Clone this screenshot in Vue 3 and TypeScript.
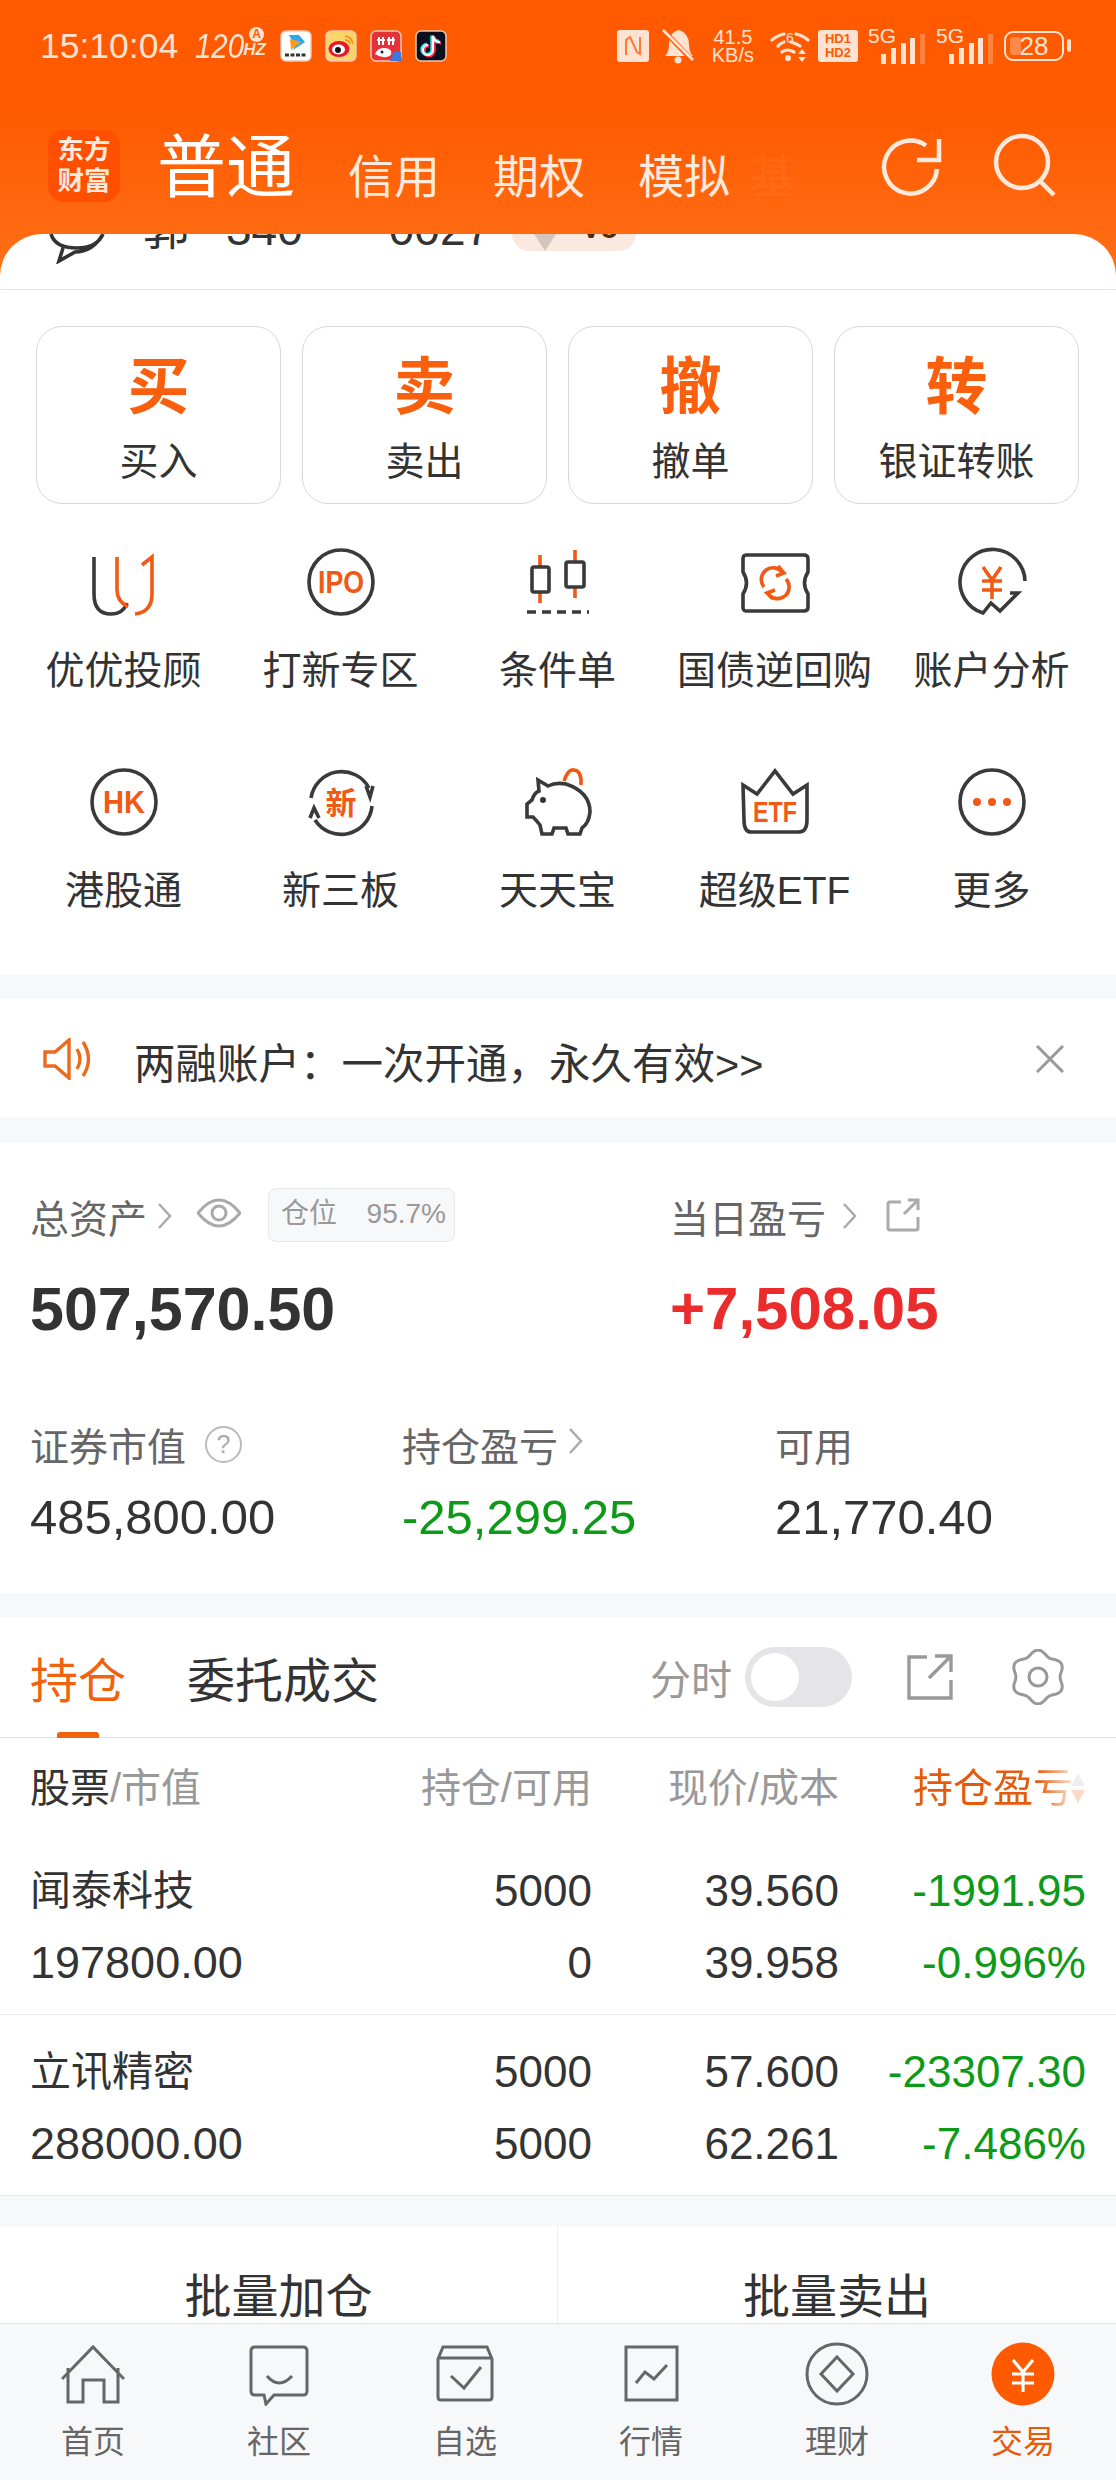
<script setup lang="ts">
interface Holding {
  name: string
  value: string
  hold: string
  free: string
  price: string
  cost: string
  gain: string
  rate: string
}

const trades = [
  { big: '买', label: '买入' },
  { big: '卖', label: '卖出' },
  { big: '撤', label: '撤单' },
  { big: '转', label: '银证转账' },
]

const tools = [
  { id: 'uu', label: '优优投顾' },
  { id: 'ipo', label: '打新专区' },
  { id: 'cond', label: '条件单' },
  { id: 'bond', label: '国债逆回购' },
  { id: 'analysis', label: '账户分析' },
  { id: 'hk', label: '港股通' },
  { id: 'neeq', label: '新三板' },
  { id: 'pig', label: '天天宝' },
  { id: 'etf', label: '超级ETF' },
  { id: 'more', label: '更多' },
]

const holdings: Holding[] = [
  { name: '闻泰科技', value: '197800.00', hold: '5000', free: '0', price: '39.560', cost: '39.958', gain: '-1991.95', rate: '-0.996%' },
  { name: '立讯精密', value: '288000.00', hold: '5000', free: '5000', price: '57.600', cost: '62.261', gain: '-23307.30', rate: '-7.486%' },
]

const tabs = [
  { id: 'home', label: '首页' },
  { id: 'community', label: '社区' },
  { id: 'watch', label: '自选' },
  { id: 'market', label: '行情' },
  { id: 'wealth', label: '理财' },
  { id: 'trade', label: '交易' },
]

// six soft lobes, one pointing straight up
const gearPath = Array.from({ length: 72 }, (_, i) => {
  const a = (i * Math.PI) / 36
  const r = 24.5 + 2.4 * Math.cos(6 * a)
  const x = 28 + r * Math.sin(a)
  const y = 28 - r * Math.cos(a)
  return `${i ? 'L' : 'M'}${x.toFixed(1)} ${y.toFixed(1)}`
}).join(' ') + 'z'
</script>

<template>
  <div class="page">
    <header class="header">
      <div class="status">
        <div class="status-left">
          <span class="clock">15:10:04</span>
          <span class="hz"><i>120</i><b>HZ</b><em>A</em></span>
          <div class="apps">
            <svg class="app" viewBox="0 0 32 32">
              <rect x="1" y="1" width="30" height="30" rx="5" fill="#fff" stroke="#e9c9b4" stroke-width="1.5" />
              <path d="M9 5 H19 L25 12 L13 20 L17 12 Q12 12 9 5z" fill="#29a8f2" />
              <path d="M10 9 L21 12 L11 20z" fill="#ff9a1f" />
              <path d="M5 25 H27" stroke="#333" stroke-width="3" stroke-dasharray="4 1.5" />
            </svg>
            <svg class="app" viewBox="0 0 32 32">
              <rect x="1" y="1" width="30" height="30" rx="5" fill="#fbd46c" stroke="#e9c9b4" stroke-width="1.5" />
              <ellipse cx="14" cy="19" rx="10.5" ry="8" fill="#e6162d" />
              <ellipse cx="13.5" cy="19.5" rx="6.5" ry="5" fill="#fff" />
              <circle cx="13" cy="20" r="3" fill="#111" />
              <path d="M20 6 Q27 7 28 14 M20 10 Q24 10 25 14" fill="none" stroke="#f59a23" stroke-width="2" />
            </svg>
            <svg class="app" viewBox="0 0 32 32">
              <rect x="1" y="1" width="30" height="30" rx="5" fill="#e4323b" stroke="#e9c9b4" stroke-width="1.5" />
              <path d="M24 22 H31 V31 H20z" fill="#3a77e0" />
              <path d="M9 7 V15 M13 7 V15 M19 7 V15 M23 7 V15 M7 10 H15 M17 10 H25" stroke="#fff" stroke-width="2" />
              <path d="M5 24 Q8 17 15 18 Q23 19 21 25 Q14 30 5 24z" fill="#fff" />
              <circle cx="12" cy="22" r="1.5" fill="#222" />
            </svg>
            <svg class="app" viewBox="0 0 32 32">
              <rect x="1" y="1" width="30" height="30" rx="5" fill="#0c0f1c" stroke="#e9c9b4" stroke-width="1.5" />
              <path d="M18 6 V20 A5 5 0 1 1 13 15 M18 6 Q19 12 25 12" fill="none" stroke="#ff2a55" stroke-width="3.4" transform="translate(1 .8)" />
              <path d="M18 6 V20 A5 5 0 1 1 13 15 M18 6 Q19 12 25 12" fill="none" stroke="#25f4ee" stroke-width="3.4" transform="translate(-1 -.6)" />
              <path d="M18 6 V20 A5 5 0 1 1 13 15 M18 6 Q19 12 25 12" fill="none" stroke="#fff" stroke-width="2" />
            </svg>
          </div>
        </div>
        <div class="status-right">
          <svg class="nfc" viewBox="0 0 32 32">
            <rect width="32" height="32" rx="3" fill="#ffe3d2" />
            <path d="M9 25 V10 L13 7 L20 22 L23 24 V7" fill="none" stroke="#ff7a33" stroke-width="2" />
          </svg>
          <svg class="bell" viewBox="0 0 32 36">
            <path d="M3 28 Q7 24 7 17 Q7 4 17 2 Q27 5 27 17 Q27 24 31 28z" fill="#ffe3d2" />
            <circle cx="16" cy="32" r="3.5" fill="#ffe3d2" />
            <path d="M0 1 L31 33" stroke="#ff5a00" stroke-width="5" />
            <path d="M1 2 L31 32" stroke="#ffe3d2" stroke-width="2.6" />
          </svg>
          <div class="speed"><span>41.5</span><span>KB/s</span></div>
          <svg class="wifi" viewBox="0 0 40 34">
            <path d="M2 11 Q8 6 14 5 M26 5 Q32 6 38 11 M8 17 Q11 14 14 13 M21 13 Q25 14 30 17 M12 23 Q17 19 24 23" fill="none" stroke="#ffe3d2" stroke-width="3.2" stroke-linecap="round" />
            <circle cx="18" cy="29" r="3" fill="#ffe3d2" />
            <text x="20" y="14" class="wifi-six">6</text>
            <path d="M32 20 L36 25 H28z M28 28 H36 L32 33z" fill="#ffe3d2" />
          </svg>
          <div class="hd"><span>HD1</span><span>HD2</span></div>
          <div class="signal">
            <span class="net">5G</span>
            <svg viewBox="0 0 45 30"><path d="M0 20 h5 v10 h-5z M10 14 h5 v16 h-5z M20 9 h5 v21 h-5z M29 4 h5 v26 h-5z" fill="#ffe3d2" /><path d="M39 0 h5 v30 h-5z" fill="#ffe3d2" opacity=".3" /></svg>
          </div>
          <div class="signal second">
            <span class="net">5G</span>
            <svg viewBox="0 0 45 30"><path d="M0 20 h5 v10 h-5z M10 14 h5 v16 h-5z M20 9 h5 v21 h-5z M29 4 h5 v26 h-5z" fill="#ffe3d2" /><path d="M39 0 h5 v30 h-5z" fill="#ffe3d2" opacity=".3" /></svg>
          </div>
          <div class="battery"><i></i><span>28</span></div>
        </div>
      </div>

      <nav class="nav">
        <div class="logo"><span>东方</span><span>财富</span></div>
        <span class="nav-main">普通</span>
        <span class="nav-item">信用</span>
        <span class="nav-item">期权</span>
        <span class="nav-item">模拟</span>
        <span class="nav-ghost">基</span>
        <svg class="nav-refresh" viewBox="0 0 64 64">
          <path d="M57 33 A26.500 26.500 0 1 1 46 9.500" fill="none" stroke="#ffe9dc" stroke-width="4.500" />
          <path d="M37 24 H59 V3" fill="none" stroke="#ffe9dc" stroke-width="4.500" />
        </svg>
        <svg class="nav-search" viewBox="0 0 64 64">
          <circle cx="29" cy="29" r="26" fill="none" stroke="#ffe9dc" stroke-width="4.500" />
          <path d="M47 48 L61 62" stroke="#ffe9dc" stroke-width="4.500" />
        </svg>
      </nav>
    </header>

    <main class="sheet">
      <div class="account">
        <svg class="account-chat" viewBox="0 0 56 30">
          <path d="M2 0 Q6 14 28 14 Q48 14 54 0 M14 14 L10 27 L26 18 Q44 18 54 0" fill="none" stroke="#333" stroke-width="3.600" />
        </svg>
        <span class="acc-name">郭</span>
        <span class="acc-a">340</span>
        <span class="acc-b">0027</span>
        <span class="acc-badge"><i></i><b>V5</b></span>
      </div>

      <section class="trades">
        <div v-for="t in trades" :key="t.big" class="trade">
          <span class="trade-big">{{ t.big }}</span>
          <span class="trade-label">{{ t.label }}</span>
        </div>
      </section>

      <section class="tools">
        <div v-for="t in tools" :key="t.id" class="tool">
          <svg class="tool-icon" viewBox="0 0 68 68">
            <template v-if="t.id === 'uu'">
              <path d="M4 9 V46 Q4 66 21 66 Q33 66 37 55" class="ink" />
              <path d="M27 9 V42 Q27 53 38 59" class="hot" />
              <path d="M45 66 Q62 64 62 46 V9 L52 17" class="hot" />
            </template>
            <template v-else-if="t.id === 'ipo'">
              <circle cx="34" cy="34" r="32" class="ink" />
              <text x="34" y="45" class="tool-text" font-size="31" textLength="46" lengthAdjust="spacingAndGlyphs">IPO</text>
            </template>
            <template v-else-if="t.id === 'cond'">
              <path d="M16 7 V20 M16 44 V55 M51 2 V14 M51 39 V50" class="hot" />
              <rect x="8" y="19" width="17" height="25" rx="2" class="ink" />
              <rect x="42" y="14" width="18" height="25" rx="2" class="ink" />
              <path d="M3 64 H65" class="ink" stroke-dasharray="9 6" />
            </template>
            <template v-else-if="t.id === 'bond'">
              <path d="M5 7 H63 Q67 7 67 11 V24 Q60 35 67 46 V59 Q67 63 63 63 H5 Q2 63 2 59 V46 Q9 35 2 24 V11 Q2 7 5 7z" class="ink" />
              <path d="M23 39 A11.500 11.500 0 0 1 41 24 M45 31 A11.500 11.500 0 0 1 28 47" class="hot" />
              <path d="M37 18 L43 25 L35 28 M32 51 L26 45 L34 42" class="hot" />
            </template>
            <template v-else-if="t.id === 'analysis'">
              <path d="M67 33 A32.500 32.500 0 1 0 25 65 L33 55 L42 63 L60 45 H52" class="ink" />
              <path d="M25 19 L34 32 L43 19 M34 32 V51 M24 33 H44 M24 42 H44" class="hot" stroke-width="4.500" />
            </template>
            <template v-else-if="t.id === 'hk'">
              <circle cx="34" cy="34" r="32" class="ink" />
              <text x="34" y="45" class="tool-text" font-size="31" textLength="42" lengthAdjust="spacingAndGlyphs">HK</text>
            </template>
            <template v-else-if="t.id === 'neeq'">
              <path d="M4 30 A31 31 0 0 1 62 20 M65 38 A31 31 0 0 1 8 52" class="ink" />
              <path d="M59 18 L63 29 L66 18 M3 50 L7 40 L12 50" class="ink" />
              <text x="34" y="46" class="tool-text cjk" font-size="31">新</text>
            </template>
            <template v-else-if="t.id === 'pig'">
              <path d="M40 13 Q44 1 50 2 Q58 3 57 17" class="hot" stroke-width="4" />
              <path d="M14 12 L24 18 Q32 14 42 16 Q66 24 66 44 Q65 55 58 60 L56 66 H44 L42 60 H30 L28 66 H18 L16 57 Q12 52 9 49 H3 V36 L8 32 Q10 25 15 23z" class="ink" />
              <circle cx="19" cy="32" r="3" fill="#333" />
            </template>
            <template v-else-if="t.id === 'etf'">
              <path d="M2 17 L16 26 L34 3 L52 26 L66 17 V52 Q66 64 58 64 H10 Q3 64 3 52z" class="ink" />
              <text x="34" y="54" class="tool-text" font-size="30" textLength="44" lengthAdjust="spacingAndGlyphs">ETF</text>
            </template>
            <template v-else>
              <circle cx="34" cy="34" r="32" class="ink" />
              <circle cx="19" cy="34" r="4" fill="#f05a14" />
              <circle cx="34" cy="34" r="4" fill="#f05a14" />
              <circle cx="49" cy="34" r="4" fill="#f05a14" />
            </template>
          </svg>
          <span class="tool-label">{{ t.label }}</span>
        </div>
      </section>

      <div class="gap"></div>

      <section class="notice">
        <svg class="notice-horn" viewBox="0 0 48 42">
          <path d="M2 14 H12 L26 2 V40 L12 28 H2z" fill="none" stroke="#ec6a1c" stroke-width="3.400" />
          <path d="M34 11 Q40 21 34 31 M40 4 Q51 21 40 38" fill="none" stroke="#ec6a1c" stroke-width="3.400" />
        </svg>
        <span class="notice-text">两融账户：一次开通，永久有效&gt;&gt;</span>
        <svg class="notice-close" viewBox="0 0 28 28">
          <path d="M1 1 L27 27 M27 1 L1 27" stroke="#999" stroke-width="3" />
        </svg>
      </section>

      <div class="gap gap-b"></div>

      <section class="assets">
        <div class="assets-top">
          <div>
            <div class="label">
              <span>总资产</span>
              <svg class="chev" viewBox="0 0 15 26"><path d="M2 1 L13 13 L2 25" /></svg>
              <svg class="eye" viewBox="0 0 44 32">
                <path d="M1 16 Q22 -10 43 16 Q22 42 1 16z" fill="none" stroke="#aaa" stroke-width="3" />
                <circle cx="22" cy="16" r="7" fill="none" stroke="#aaa" stroke-width="3" />
              </svg>
              <span class="pill"><span>仓位</span><span>95.7%</span></span>
            </div>
            <div class="big">507,570.50</div>
          </div>
          <div>
            <div class="label">
              <span>当日盈亏</span>
              <svg class="chev day" viewBox="0 0 15 26"><path d="M2 1 L13 13 L2 25" /></svg>
              <svg class="share" viewBox="0 0 34 34">
                <path d="M15 4 H4 Q2 4 2 6 V30 Q2 32 4 32 H30 Q32 32 32 30 V19 M18 16 L32 2 M22 2 H32 V12" fill="none" stroke="#aaa" stroke-width="3" />
              </svg>
            </div>
            <div class="big up">+7,508.05</div>
          </div>
        </div>
        <div class="assets-sub">
          <div>
            <div class="label">
              <span>证券市值</span>
              <span class="help">?</span>
            </div>
            <div class="num">485,800.00</div>
          </div>
          <div>
            <div class="label">
              <span>持仓盈亏</span>
              <svg class="chev hold" viewBox="0 0 15 26"><path d="M2 1 L13 13 L2 25" /></svg>
            </div>
            <div class="num down">-25,299.25</div>
          </div>
          <div>
            <div class="label"><span>可用</span></div>
            <div class="num">21,770.40</div>
          </div>
        </div>
      </section>

      <div class="gap"></div>

      <section class="bar">
        <span class="tab active">持仓</span>
        <span class="tab">委托成交</span>
        <span class="bar-time">分时</span>
        <span class="switch"><i></i></span>
        <svg class="bar-share" viewBox="0 0 46 46">
          <path d="M20 3 H2 V44 H44 V26 M22 24 L44 2 M28 2 H44 V18" fill="none" stroke="#999" stroke-width="3.400" />
        </svg>
        <svg class="bar-gear" viewBox="0 0 56 56">
          <path :d="gearPath" fill="none" stroke="#999" stroke-width="3" />
          <circle cx="28" cy="28" r="9" fill="none" stroke="#999" stroke-width="3" />
        </svg>
      </section>

      <section class="table">
        <div class="row head">
          <div class="cell-name">股票<span>/市值</span></div>
          <div>持仓/可用</div>
          <div>现价/成本</div>
          <div class="head-sort">
            <span class="head-fade">持仓盈亏</span>
            <svg class="sort" viewBox="0 0 16 34">
              <path d="M8 2 L15 15 H1z" fill="#eee" />
              <path d="M1 19 H15 L8 32z" fill="#fbd9c6" />
            </svg>
          </div>
        </div>
        <div v-for="h in holdings" :key="h.name" class="row item">
          <div class="cell-name"><div>{{ h.name }}</div><div>{{ h.value }}</div></div>
          <div><div>{{ h.hold }}</div><div>{{ h.free }}</div></div>
          <div><div>{{ h.price }}</div><div>{{ h.cost }}</div></div>
          <div class="down"><div>{{ h.gain }}</div><div>{{ h.rate }}</div></div>
        </div>
      </section>

      <div class="gap gap-c"></div>

      <section class="batch">
        <span>批量加仓</span>
        <span>批量卖出</span>
      </section>
    </main>

    <footer class="tabbar">
      <div v-for="t in tabs" :key="t.id" class="tabbar-item" :class="{ on: t.id === 'trade' }">
        <svg class="tabbar-icon" viewBox="0 0 64 64">
          <template v-if="t.id === 'home'">
            <path d="M7 26 V60 H22 V38 H43 V60 H57 V26 M1 37 L32 5 L63 37" class="line" />
          </template>
          <template v-else-if="t.id === 'community'">
            <path d="M8 5 H56 Q60 5 60 9 V49 Q60 53 56 53 H27 L19 62 L17 53 H8 Q4 53 4 49 V9 Q4 5 8 5z" class="line" />
            <path d="M20 34 Q32 48 45 34" class="line" />
          </template>
          <template v-else-if="t.id === 'watch'">
            <path d="M10 5 H54 L59 17 V55 Q59 58 56 58 H8 Q5 58 5 55 V17z M5 16 H59" class="line" />
            <path d="M18 34 L31 46 L48 25" class="line" />
          </template>
          <template v-else-if="t.id === 'market'">
            <path d="M7 5 H58 V58 H7z" class="line" />
            <path d="M17 41 L26 30 L35 37 L48 23" class="line" />
          </template>
          <template v-else-if="t.id === 'wealth'">
            <circle cx="32" cy="32" r="30" class="line" />
            <path d="M32 15 L48 32 L32 49 L16 32z" class="line" />
          </template>
          <template v-else>
            <circle cx="32" cy="32" r="31.500" fill="#ff5a00" />
            <path d="M22 18 L32 30 L42 18 M32 30 V50 M21 32 H43 M21 41 H43" fill="none" stroke="#fff" stroke-width="3.200" />
          </template>
        </svg>
        <span class="tabbar-label">{{ t.label }}</span>
      </div>
    </footer>
  </div>
</template>

<style>
html,
body {
  margin: 0;
  background: #fff;
}
</style>

<style scoped>
.page {
  width: 1116px;
  height: 2480px;
  overflow: hidden;
  background: #fff;
  color: #333;
  font-family: "Liberation Sans", "Noto Sans CJK SC", sans-serif;
}

.header {
  height: 290px;
  box-sizing: border-box;
  background: linear-gradient(180deg, #ff5a00 0, #ff5a00 110px, #ff7219 290px);
}

.status {
  display: flex;
  justify-content: space-between;
  height: 64px;
  padding: 28px 48px 0 40px;
  color: #ffe3d2;
}

.status-left,
.status-right {
  display: flex;
  align-items: center;
  height: 36px;
}

.clock {
  font-size: 35.5px;
}

.hz {
  position: relative;
  display: flex;
  align-items: flex-end;
  margin-left: 17px;
  width: 69px;
  height: 36px;
}

.hz i {
  display: block;
  flex: none;
  width: 48px;
  font-size: 35px;
  line-height: 36px;
  transform: scaleX(0.84);
  transform-origin: 0 50%;
}

.hz b {
  font-size: 17px;
  font-style: italic;
  line-height: 28px;
}

.hz em {
  position: absolute;
  right: 0;
  top: -1px;
  width: 15px;
  height: 15px;
  border-radius: 50%;
  background: #ffe3d2;
  color: #ff5a00;
  font-size: 12px;
  font-style: normal;
  font-weight: 700;
  line-height: 15px;
  text-align: center;
}

.apps {
  display: flex;
  gap: 13px;
  margin-left: 16px;
}

.app {
  display: block;
  width: 32px;
  height: 32px;
}

.nfc {
  width: 32px;
  height: 32px;
}

.bell {
  width: 32px;
  height: 36px;
  margin-left: 13px;
}

.speed {
  display: flex;
  flex-direction: column;
  margin-left: 18px;
  font-size: 20px;
  line-height: 18px;
  text-align: center;
}

.wifi {
  width: 40px;
  height: 34px;
  margin-left: 16px;
}

.wifi-six {
  fill: #ffe3d2;
  font-size: 14px;
  text-anchor: middle;
}

.hd {
  display: flex;
  flex-direction: column;
  justify-content: center;
  width: 40px;
  height: 32px;
  margin-left: 8px;
  border-radius: 3px;
  background: #ffe3d2;
  color: #ff5a00;
  font-size: 13px;
  font-weight: 700;
  line-height: 14px;
  text-align: center;
}

.signal {
  position: relative;
  width: 58px;
  height: 36px;
  margin-left: 10px;
}

.signal.second {
  margin-left: 10px;
}

.net {
  position: absolute;
  left: 0;
  top: -3px;
  font-size: 21px;
  line-height: 22px;
}

.signal svg {
  position: absolute;
  right: 0;
  bottom: 0;
  width: 45px;
  height: 30px;
}

.battery {
  position: relative;
  display: flex;
  align-items: center;
  justify-content: center;
  width: 60px;
  height: 30px;
  box-sizing: border-box;
  margin-left: 10px;
  margin-right: 4px;
  border: 2.5px solid #ffe3d2;
  border-radius: 9px;
  font-size: 26px;
}

.battery i {
  position: absolute;
  left: 4px;
  top: 4px;
  bottom: 4px;
  width: 11px;
  border-radius: 3px;
  background: rgba(255, 227, 210, 0.35);
}

.battery::after {
  content: "";
  position: absolute;
  right: -9px;
  top: 6px;
  width: 4px;
  height: 13px;
  border-radius: 2px;
  background: #ffe3d2;
}

.battery span {
  position: relative;
}

.nav {
  display: flex;
  align-items: flex-end;
  height: 72px;
  margin-top: 38px;
  padding-left: 48px;
  color: #ffeadf;
}

.logo {
  display: flex;
  flex-direction: column;
  align-items: center;
  justify-content: center;
  width: 72px;
  height: 72px;
  border-radius: 16px;
  background: #ff4f00;
  color: #ffe9dc;
  font-size: 26.500px;
  font-weight: 700;
  line-height: 31px;
}

.nav-main {
  margin-left: 37px;
  margin-bottom: -2px;
  color: #fff;
  font-size: 69px;
  line-height: 70px;
}

.nav-item {
  margin-left: 53px;
  font-size: 46px;
  line-height: 56px;
  margin-bottom: -3px;
}

.nav-ghost {
  margin-left: 20px;
  width: 46px;
  font-size: 46px;
  line-height: 56px;
  margin-bottom: -3px;
  opacity: 0.05;
}

.nav-refresh {
  width: 64px;
  height: 64px;
  margin-left: 84px;
  margin-bottom: 2px;
}

.nav-search {
  width: 64px;
  height: 64px;
  margin-left: 49px;
  margin-bottom: 5px;
}

.sheet {
  position: relative;
  height: 2089px;
  margin-top: -56px;
  border-radius: 42px 42px 0 0;
  background: #fff;
  overflow: hidden;
}

.account {
  display: flex;
  height: 55px;
  overflow: hidden;
  border-bottom: 1px solid #e8e8e8;
  color: #333;
  font-size: 46px;
}

.account > * {
  flex: none;
}

.account-chat {
  width: 56px;
  height: 30px;
  margin-left: 49px;
}

.acc-name,
.acc-a,
.acc-b {
  height: 24px;
  line-height: 0;
  margin-top: -5px;
}

.acc-name {
  margin-left: 38px;
}

.acc-a {
  margin-left: 37px;
}

.acc-b {
  margin-left: 86px;
}

.acc-badge {
  position: relative;
  width: 124px;
  height: 17px;
  margin-left: 21px;
  border-radius: 0 0 20px 20px;
  background: #f9e9df;
}

.acc-badge i {
  position: absolute;
  left: 22px;
  top: 0;
  border-left: 11px solid transparent;
  border-right: 11px solid transparent;
  border-top: 17px solid #d3c7bd;
}

.acc-badge b {
  position: absolute;
  left: 69px;
  bottom: 13px;
  color: #5a2a08;
  font-size: 30px;
  line-height: 20px;
}

.trades {
  display: grid;
  grid-template-columns: repeat(4, 245px);
  gap: 21px;
  padding: 36px 0 0 36px;
}

.trade {
  display: flex;
  flex-direction: column;
  align-items: center;
  height: 178px;
  box-sizing: border-box;
  border: 1px solid #d8d8d8;
  border-radius: 26px;
}

.trade-big {
  margin-top: 25px;
  color: #f95f0c;
  font-size: 62px;
  font-weight: 700;
  line-height: 72px;
}

.trade-label {
  margin-top: 12px;
  font-size: 39px;
  line-height: 52px;
}

.tools {
  display: grid;
  grid-template-columns: repeat(5, 217px);
  row-gap: 71px;
  padding: 44px 0 58px 15px;
}

.tool {
  display: flex;
  flex-direction: column;
  align-items: center;
  white-space: nowrap;
}

.tool-icon {
  width: 68px;
  height: 68px;
  overflow: visible;
}

.ink {
  fill: none;
  stroke: #3a3a3a;
  stroke-width: 3.600;
}

.hot {
  fill: none;
  stroke: #f05a14;
  stroke-width: 3.600;
}

.tool-text {
  fill: #f05a14;
  font-weight: 700;
  text-anchor: middle;
}

.tool-label {
  margin-top: 29px;
  font-size: 39px;
  line-height: 52px;
}

.gap {
  height: 24px;
  background: #f7f8fa;
}

.gap-b {
  height: 25px;
}

.gap-c {
  height: 30px;
}

.notice {
  display: flex;
  align-items: center;
  height: 119px;
  padding: 0 52px 0 43px;
}

.notice-horn {
  width: 48px;
  height: 42px;
}

.notice-text {
  flex: 1;
  margin-left: 43px;
  padding-top: 4px;
  font-size: 41.500px;
}

.notice-close {
  width: 28px;
  height: 28px;
}

.assets {
  height: 450px;
  box-sizing: border-box;
  padding: 48px 0 0 30px;
}

.assets-top {
  display: grid;
  grid-template-columns: 640px 1fr;
}

.assets-sub {
  display: grid;
  grid-template-columns: 372px 373px 1fr;
  margin-top: 75px;
}

.label {
  display: flex;
  align-items: center;
  height: 54px;
  box-sizing: border-box;
  padding-bottom: 4px;
  color: #666;
  font-size: 39px;
  white-space: nowrap;
}

.chev {
  width: 15px;
  height: 26px;
  margin-left: 10px;
  fill: none;
  stroke: #aaa;
  stroke-width: 2.500;
}

.chev.day {
  margin-left: 16px;
}

.eye {
  width: 44px;
  height: 32px;
  margin-left: 25px;
  margin-top: -6px;
}

.pill {
  display: flex;
  justify-content: space-between;
  width: 187px;
  height: 54px;
  box-sizing: border-box;
  margin-left: 27px;
  margin-top: -2px;
  padding: 0 8px 0 12px;
  border: 1px solid #e8e8e8;
  border-radius: 8px;
  background: #f7f8fa;
  color: #999;
  font-size: 28px;
  line-height: 50px;
}

.share {
  width: 34px;
  height: 34px;
  margin-left: 29px;
  margin-top: -2px;
}

.big {
  margin-top: 29px;
  font-size: 61px;
  font-weight: 700;
  line-height: 70px;
}

.big.up {
  font-size: 60px;
}

.up {
  color: #eb2c2c;
}

.down {
  color: #0e9a18;
}

.help {
  width: 33px;
  height: 33px;
  margin-left: 19px;
  border: 2px solid #bbb;
  border-radius: 50%;
  color: #aaa;
  font-size: 25px;
  line-height: 33px;
  text-align: center;
}

.chev.hold {
  margin-top: -6px;
}

.num {
  margin-top: 14px;
  font-size: 49px;
  line-height: 60px;
}

.bar {
  position: relative;
  display: flex;
  align-items: center;
  height: 120px;
  padding-left: 30px;
  border-bottom: 1px solid #e2e2e2;
}

.tab {
  position: relative;
  margin-right: 61px;
  font-size: 48px;
}

.tab.active {
  color: #f0620f;
}

.tab.active::after {
  content: "";
  position: absolute;
  left: 27px;
  bottom: -26px;
  width: 42px;
  height: 6px;
  border-radius: 3px 3px 0 0;
  background: #f0620f;
}

.bar-time {
  margin-left: auto;
  color: #999;
  font-size: 41px;
}

.switch {
  position: relative;
  width: 107px;
  height: 60px;
  margin-left: 13px;
  border-radius: 30px;
  background: #e5e5e7;
}

.switch i {
  position: absolute;
  left: 6px;
  top: 6px;
  width: 48px;
  height: 48px;
  border-radius: 50%;
  background: #fff;
}

.bar-share {
  width: 46px;
  height: 46px;
  margin-left: 55px;
}

.bar-gear {
  width: 56px;
  height: 56px;
  margin-left: 57px;
  margin-right: 50px;
}

.table {
  color: #333;
}

.row {
  display: grid;
  grid-template-columns: 1fr 192px 247px 247px;
  padding: 0 30px;
  text-align: right;
}

.head {
  height: 96px;
  box-sizing: border-box;
  padding-top: 4px;
  color: #999;
  font-size: 40px;
  line-height: 92px;
  white-space: nowrap;
}

.cell-name {
  text-align: left;
}

.cell-name span {
  color: #999;
}

.head .cell-name {
  color: #333;
}

.head-sort {
  position: relative;
  text-align: left;
  padding-left: 74px;
  color: #e8590c;
}

.head-fade {
  display: block;
  -webkit-mask-image: linear-gradient(90deg, #000 72%, transparent 97%);
  mask-image: linear-gradient(90deg, #000 72%, transparent 97%);
}

.sort {
  position: absolute;
  right: 0;
  top: 29px;
  width: 16px;
  height: 34px;
}

.item {
  padding-top: 21px;
  padding-bottom: 15px;
  border-bottom: 1px solid #eaeaea;
  font-size: 44px;
  line-height: 72px;
}

.item .cell-name {
  font-size: 45px;
}

.item .cell-name > div:first-child {
  font-size: 41px;
}

.batch {
  display: grid;
  grid-template-columns: 557px 1fr;
  height: 97px;
  font-size: 47px;
  line-height: 60px;
  text-align: center;
}

.batch span {
  padding-top: 41px;
}

.batch span + span {
  border-left: 1px solid #eee;
}

.tabbar {
  display: grid;
  grid-template-columns: repeat(6, 186px);
  height: 157px;
  box-sizing: border-box;
  padding-top: 18px;
  border-top: 1px solid #e2e2e2;
  background: #f7f8fa;
}

.tabbar-item {
  display: flex;
  flex-direction: column;
  align-items: center;
  color: #666;
}

.tabbar-item.on {
  color: #e8590c;
}

.tabbar-icon {
  width: 64px;
  height: 64px;
}

.line {
  fill: none;
  stroke: #666;
  stroke-width: 3;
}

.tabbar-label {
  margin-top: 16px;
  font-size: 32px;
  line-height: 40px;
}
</style>
